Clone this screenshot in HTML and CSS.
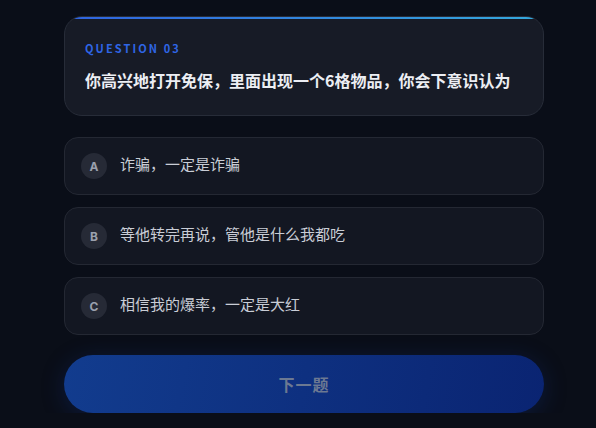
FILE: index.html
```html
<!DOCTYPE html>
<html lang="zh-CN">
<head>
  <meta charset="UTF-8">
  <title>Quiz</title>
  <link rel="stylesheet" href="styles.css">
</head>
<body>
  <div class="quiz">
    <!-- Question card -->
    <section class="question-card">
      <div class="question-label">QUESTION 03</div>
      <h2 class="question-text">你高兴地打开免保，里面出现一个6格物品，你会下意识认为</h2>
    </section>

    <div class="options">
      <div class="option">
        <span class="option-key">A</span>
        <span class="option-text">诈骗，一定是诈骗</span>
      </div>
      <div class="option">
        <span class="option-key">B</span>
        <span class="option-text">等他转完再说，管他是什么我都吃</span>
      </div>
      <div class="option">
        <span class="option-key">C</span>
        <span class="option-text">相信我的爆率，一定是大红</span>
      </div>
    </div>

    <button class="next-button" disabled>下一题</button>
  </div>
</body>
</html>
```

FILE: styles.css
```css
body {
  margin: 0;
  padding: 0 0 0 12px;
  background: #0a0e18;
  font-family: "Noto Sans CJK SC", "Noto Sans", sans-serif;
  color: #e6e8ee;
}

.quiz {
  width: 480px;
  margin: 0 auto;
  padding-top: 16px;
}

.question-card {
  position: relative;
  overflow: hidden;
  background: #171b26;
  border: 1px solid #272c38;
  border-radius: 18px;
  padding: 23px 20px;
}

.question-card::before {
  content: "";
  position: absolute;
  top: 0;
  left: 0;
  right: 0;
  height: 2px;
  background: linear-gradient(90deg, #2f63e0, #34a8dc);
}

.question-label {
  color: #2f66e6;
  font-size: 11px;
  font-weight: 700;
  letter-spacing: 2.1px;
  line-height: 16px;
}

.question-text {
  margin: 12px 0 0;
  font-size: 16px;
  font-weight: 700;
  line-height: 24px;
  color: #eceef3;
}

.options {
  display: flex;
  flex-direction: column;
  gap: 12px;
  margin-top: 21px;
}

.option {
  display: flex;
  align-items: center;
  gap: 13px;
  height: 56px;
  padding: 0 16px;
  background: #131722;
  border: 1px solid #242833;
  border-radius: 14px;
}

.option-key {
  display: flex;
  align-items: center;
  justify-content: center;
  width: 26px;
  height: 26px;
  border-radius: 50%;
  background: #262a36;
  color: #9aa0ad;
  font-family: "Inter", "Noto Sans", sans-serif;
  font-size: 12px;
  font-weight: 700;
}

.option-text {
  font-size: 15px;
  line-height: 20px;
  padding-bottom: 4px;
  color: #c9cdd6;
}

.next-button {
  display: block;
  width: 100%;
  height: 58px;
  margin-top: 20px;
  border: none;
  border-radius: 29px;
  background: linear-gradient(100deg, #123c8e, #0a2472);
  box-shadow: 0 4px 22px rgba(16, 50, 130, 0.35);
  color: #6c7992;
  font-family: "Noto Sans CJK SC", sans-serif;
  font-size: 16px;
  font-weight: 700;
  letter-spacing: 1px;
}
```
